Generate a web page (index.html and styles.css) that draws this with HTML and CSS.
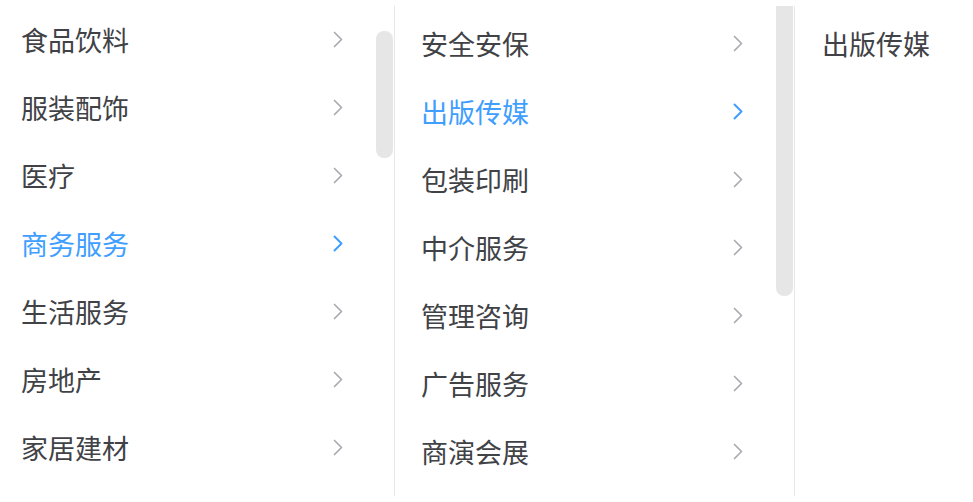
FILE: index.html
```html
<!DOCTYPE html>
<html lang="zh-CN">
<head>
<meta charset="utf-8">
<title>级联选择</title>
<link rel="stylesheet" href="styles.css">
</head>
<body>
<div class="cascader">
  <div class="menu menu-1">
    <ul class="list list-scrolled">
      <li class="item"><span>食品饮料</span><svg class="arrow" viewBox="0 0 10 17"><path d="M1.5 1.5 L8.5 8.5 L1.5 15.5"/></svg></li>
      <li class="item"><span>服装配饰</span><svg class="arrow" viewBox="0 0 10 17"><path d="M1.5 1.5 L8.5 8.5 L1.5 15.5"/></svg></li>
      <li class="item"><span>医疗</span><svg class="arrow" viewBox="0 0 10 17"><path d="M1.5 1.5 L8.5 8.5 L1.5 15.5"/></svg></li>
      <li class="item active"><span>商务服务</span><svg class="arrow" viewBox="0 0 10 17"><path d="M1.5 1.5 L8.5 8.5 L1.5 15.5"/></svg></li>
      <li class="item"><span>生活服务</span><svg class="arrow" viewBox="0 0 10 17"><path d="M1.5 1.5 L8.5 8.5 L1.5 15.5"/></svg></li>
      <li class="item"><span>房地产</span><svg class="arrow" viewBox="0 0 10 17"><path d="M1.5 1.5 L8.5 8.5 L1.5 15.5"/></svg></li>
      <li class="item"><span>家居建材</span><svg class="arrow" viewBox="0 0 10 17"><path d="M1.5 1.5 L8.5 8.5 L1.5 15.5"/></svg></li>
    </ul>
    <div class="thumb thumb-1"></div>
  </div>
  <div class="menu menu-2">
    <ul class="list">
      <li class="item"><span>安全安保</span><svg class="arrow" viewBox="0 0 10 17"><path d="M1.5 1.5 L8.5 8.5 L1.5 15.5"/></svg></li>
      <li class="item active"><span>出版传媒</span><svg class="arrow" viewBox="0 0 10 17"><path d="M1.5 1.5 L8.5 8.5 L1.5 15.5"/></svg></li>
      <li class="item"><span>包装印刷</span><svg class="arrow" viewBox="0 0 10 17"><path d="M1.5 1.5 L8.5 8.5 L1.5 15.5"/></svg></li>
      <li class="item"><span>中介服务</span><svg class="arrow" viewBox="0 0 10 17"><path d="M1.5 1.5 L8.5 8.5 L1.5 15.5"/></svg></li>
      <li class="item"><span>管理咨询</span><svg class="arrow" viewBox="0 0 10 17"><path d="M1.5 1.5 L8.5 8.5 L1.5 15.5"/></svg></li>
      <li class="item"><span>广告服务</span><svg class="arrow" viewBox="0 0 10 17"><path d="M1.5 1.5 L8.5 8.5 L1.5 15.5"/></svg></li>
      <li class="item"><span>商演会展</span><svg class="arrow" viewBox="0 0 10 17"><path d="M1.5 1.5 L8.5 8.5 L1.5 15.5"/></svg></li>
    </ul>
    <div class="thumb thumb-2"></div>
  </div>
  <div class="menu menu-3">
    <ul class="list">
      <li class="item leaf"><span>出版传媒</span></li>
    </ul>
  </div>
</div>
</body>
</html>
```
FILE: styles.css
```css
html, body {
  margin: 0;
  padding: 0;
  background: #ffffff;
  overflow: hidden;
}

body {
  font-family: "Noto Sans CJK SC", "Noto Sans", sans-serif;
  color: #404246;
}

.cascader {
  display: flex;
  margin-top: 6px;
  margin-left: -5px;
  height: 490px;
}

.menu {
  position: relative;
  width: 400px;
  height: 490px;
  box-sizing: border-box;
  border-right: 1px solid #e4e7ed;
  overflow: hidden;
  flex: none;
}

.menu-3 {
  border-right: none;
  width: 200px;
}

.list {
  list-style: none;
  margin: 0;
  padding: 3px 0 0;
}

.list-scrolled {
  padding-top: 0;
  margin-top: -1px;
}

.item {
  display: flex;
  align-items: center;
  justify-content: space-between;
  height: 68px;
  padding: 0 51px 0 26px;
  font-size: 27px;
  line-height: 1;
  color: #404246;
}

.item.leaf {
  padding-left: 27px;
}

.item.active {
  color: #409eff;
}

.arrow {
  width: 10px;
  height: 17px;
  flex: none;
  fill: none;
  stroke: #a8abb2;
  stroke-width: 1.7;
  stroke-linecap: round;
  stroke-linejoin: round;
}

.item.active .arrow {
  stroke: #409eff;
  stroke-width: 2;
}

.thumb {
  position: absolute;
  right: 1px;
  width: 17px;
  border-radius: 8px;
  background: #e6e6e7;
}

.thumb-1 {
  top: 25px;
  height: 127px;
}

.thumb-2 {
  top: 0;
  height: 290px;
  border-radius: 0 0 8px 8px;
}
```
